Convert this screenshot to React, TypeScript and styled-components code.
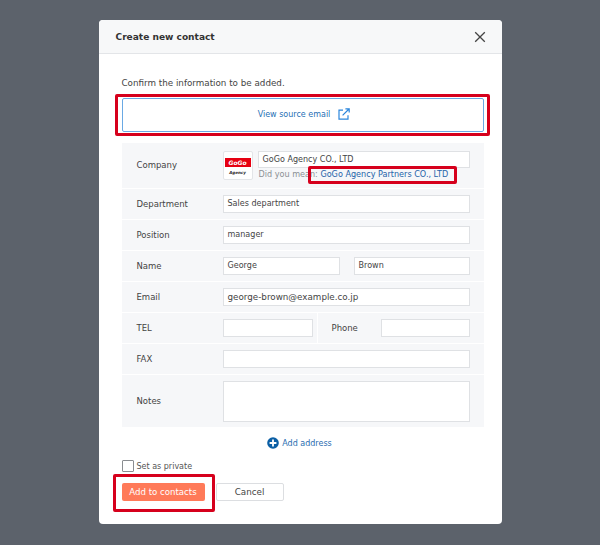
import React from "react";
import styled, { createGlobalStyle } from "styled-components";

const Global = createGlobalStyle`
  html, body { margin: 0; padding: 0; background: #5c626b; }
  body { font-family: "DejaVu Sans", "Noto Sans CJK JP", sans-serif; font-size: 9px; color: #333; }
`;
const Page = styled.div`
  width: 600px; height: 545px; padding-top: 20px; box-sizing: border-box;
  display: flex; justify-content: center; align-items: flex-start;
`;
const Modal = styled.div`
  width: 403px; height: 504px; background: #fff; border-radius: 4px; overflow: hidden; box-sizing: border-box;
`;
const Header = styled.div`
  height: 34px; box-sizing: border-box; background: #f7f8f9; border-bottom: 1px solid #e3e5e8;
  display: flex; align-items: center; justify-content: space-between; padding: 0 16px 0 17px;
`;
const Title = styled.h1`
  margin: 0; font-size: 9.05px; font-weight: 700; color: #333; font-family: "DejaVu Sans", sans-serif;
`;
const Close = styled.button`
  border: 0; background: none; padding: 0; width: 12px; height: 12px; display: flex; color: #444;
`;
const Body = styled.div`
  padding: 23px 18px 0 23px; display: flex; flex-direction: column;
`;
const Intro = styled.p`
  margin: 0; font-size: 8.75px; line-height: 12px; color: #444;
`;
const SourceFrame = styled.div`
  margin: 5px -6px 0 -7px; border: 3px solid #d6001c; border-radius: 2px; height: 42px; padding: 1px 3px 1px 4px;
  box-sizing: border-box; display: flex;
`;
const SourceButton = styled.a`
  flex: 1; box-sizing: border-box; border: 1px solid #6aa9e4; border-radius: 2px; padding: 0 0 2px 3px;
  display: flex; align-items: center; justify-content: center; gap: 8px; color: #1f6fb5; font-size: 8px; background: #fff;
`;
const Table = styled.div`
  margin-top: 7px; display: flex; flex-direction: column; gap: 1px;
`;
const Row = styled.div<{ $h: number }>`
  height: ${p => p.$h}px; background: #f6f7f9; display: flex; align-items: center;
`;
const Label = styled.div<{ $w?: number; $divided?: boolean }>`
  width: ${p => p.$w ?? 101}px; padding-left: ${p => p.$divided ? 14 : 15}px; padding-bottom: 1px; box-sizing: border-box; flex: none; color: #444; font-size: 8.5px;
  ${p => p.$divided ? "border-left: 1px solid #fff; height: 30px; display: flex; align-items: center;" : ""}
`;
const Field = styled.div<{ $w?: number; $h?: number; $size?: number }>`
  ${p => p.$w ? `width:${p.$w}px;flex:none;` : "flex:1;"} height: ${p => p.$h ?? 18}px; box-sizing: border-box;
  background: #fff; border: 1px solid #dfe1e4; padding: 0 4px 1px; display: flex; align-items: center; font-size: ${p => p.$size ?? 8.05}px; color: #444;
`;
const CompanyField = styled(Field)`
  flex: none;
`;
const Fields = styled.div`
  flex: 1; display: flex; align-items: center; padding-right: 14px; min-width: 0;
`;
const Logo = styled.div`
  width: 30px; height: 29px; flex: none; box-sizing: border-box; background: #fff; border: 1px solid #e3e5e8; border-radius: 2px;
  display: flex; flex-direction: column; align-items: center; padding-top: 6px; margin-right: 5px;
`;
const LogoBar = styled.div`
  width: 26px; height: 9px; background: #e60012; color: #fff; font-size: 6px; font-weight: 700; font-style: italic;
  display: flex; align-items: center; justify-content: center;
`;
const LogoSub = styled.div`
  font-size: 4px; font-style: italic; font-weight: 700; color: #222; margin-top: 3px;
`;
const CompanyCol = styled.div`
  flex: 1; display: flex; flex-direction: column; min-width: 0;
`;
const Hint = styled.div`
  margin-top: 1px; padding-left: 1px; font-size: 8.1px; line-height: 11px; color: #8b8f94; white-space: nowrap;
`;
const HintLink = styled.a`
  color: #1f63a8; position: relative;
`;
const HintMark = styled.span`
  position: absolute; left: -12px; right: -9px; top: -3px; bottom: -5px; border: 3px solid #d6001c; border-radius: 2px;
`;
const Gap = styled.div<{ $w: number }>`
  width: ${p => p.$w}px; flex: none;
`;
const AddAddress = styled.div`
  margin-top: 9px; height: 14px; display: flex; align-items: center; justify-content: center; gap: 3px; color: #2a6db0; font-size: 8px; padding-right: 6px;
`;
const PrivateRow = styled.label`
  margin-top: 10px; display: flex; align-items: center; gap: 3px; color: #555; font-size: 8px; height: 12px;
`;
const Box = styled.span`
  width: 12px; height: 12px; box-sizing: border-box; border: 1px solid #8a8d91; background: #fff; border-radius: 1px;
`;
const Actions = styled.div`
  margin-top: 11px; display: flex; align-items: center; gap: 11px;
`;
const PrimaryWrap = styled.div`
  position: relative; display: flex;
`;
const Primary = styled.button`
  width: 83px; height: 18px; border: 0; border-radius: 2px; background: #ff7a59; color: #fff; padding: 0; font: inherit; font-size: 8.6px;
`;
const PrimaryMark = styled.span`
  position: absolute; left: -9px; right: -10px; top: -9px; bottom: -11px; border: 3px solid #d6001c; border-radius: 2px;
`;
const Secondary = styled.button`
  width: 68px; height: 18px; border: 1px solid #dcdee1; border-radius: 2px; background: #fff; color: #444; padding: 0; font: inherit; font-size: 8.75px;
`;

export default function App() {
  return (
    <>
      <Global />
      <Page>
        <Modal>
          <Header>
            <Title>Create new contact</Title>
            <Close aria-label="Close">
              <svg width="12" height="12" viewBox="0 0 12 12"><path d="M1.2 1.2l9.6 9.6M10.8 1.2l-9.6 9.6" stroke="#444" strokeWidth="1.3" fill="none" /></svg>
            </Close>
          </Header>
          <Body>
            <Intro>Confirm the information to be added.</Intro>
            <SourceFrame>
              <SourceButton>
                View source email
                <svg width="12" height="12" viewBox="0 0 12 12" fill="none" stroke="#2b86dc" strokeWidth="1.2">
                  <path d="M5 2.2H1v9h9V7.2" />
                  <path d="M4.6 7.4L11 1M7.4 .8h3.8v3.8" />
                </svg>
              </SourceButton>
            </SourceFrame>
            <Table>
              <Row $h={45}>
                <Label>Company</Label>
                <Fields>
                  <Logo><LogoBar>GoGo</LogoBar><LogoSub>Agency</LogoSub></Logo>
                  <CompanyCol>
                    <CompanyField $h={17}>GoGo Agency CO., LTD</CompanyField>
                    <Hint>Did you mean: <HintLink><HintMark />GoGo Agency Partners CO., LTD</HintLink></Hint>
                  </CompanyCol>
                </Fields>
              </Row>
              <Row $h={30}><Label>Department</Label><Fields><Field>Sales department</Field></Fields></Row>
              <Row $h={30}><Label>Position</Label><Fields><Field>manager</Field></Fields></Row>
              <Row $h={30}><Label>Name</Label><Fields><Field $w={117}>George</Field><Gap $w={14} /><Field>Brown</Field></Fields></Row>
              <Row $h={30}><Label>Email</Label><Fields><Field $size={8.75}>george-brown@example.co.jp</Field></Fields></Row>
              <Row $h={30}><Label>TEL</Label><Fields><Field $w={90} /><Gap $w={4} /><Label $w={64} $divided>Phone</Label><Field /></Fields></Row>
              <Row $h={30}><Label>FAX</Label><Fields><Field /></Fields></Row>
              <Row $h={52}><Label>Notes</Label><Fields><Field $h={41} /></Fields></Row>
            </Table>
            <AddAddress>
              <svg width="12" height="12" viewBox="0 0 12 12"><circle cx="6" cy="6" r="5.8" fill="#0b5fa5" /><path d="M6 2.6v6.8M2.6 6h6.8" stroke="#fff" strokeWidth="1.8" /></svg>
              Add address
            </AddAddress>
            <PrivateRow><Box />Set as private</PrivateRow>
            <Actions>
              <PrimaryWrap><Primary>Add to contacts</Primary><PrimaryMark /></PrimaryWrap>
              <Secondary>Cancel</Secondary>
            </Actions>
          </Body>
        </Modal>
      </Page>
    </>
  );
}
